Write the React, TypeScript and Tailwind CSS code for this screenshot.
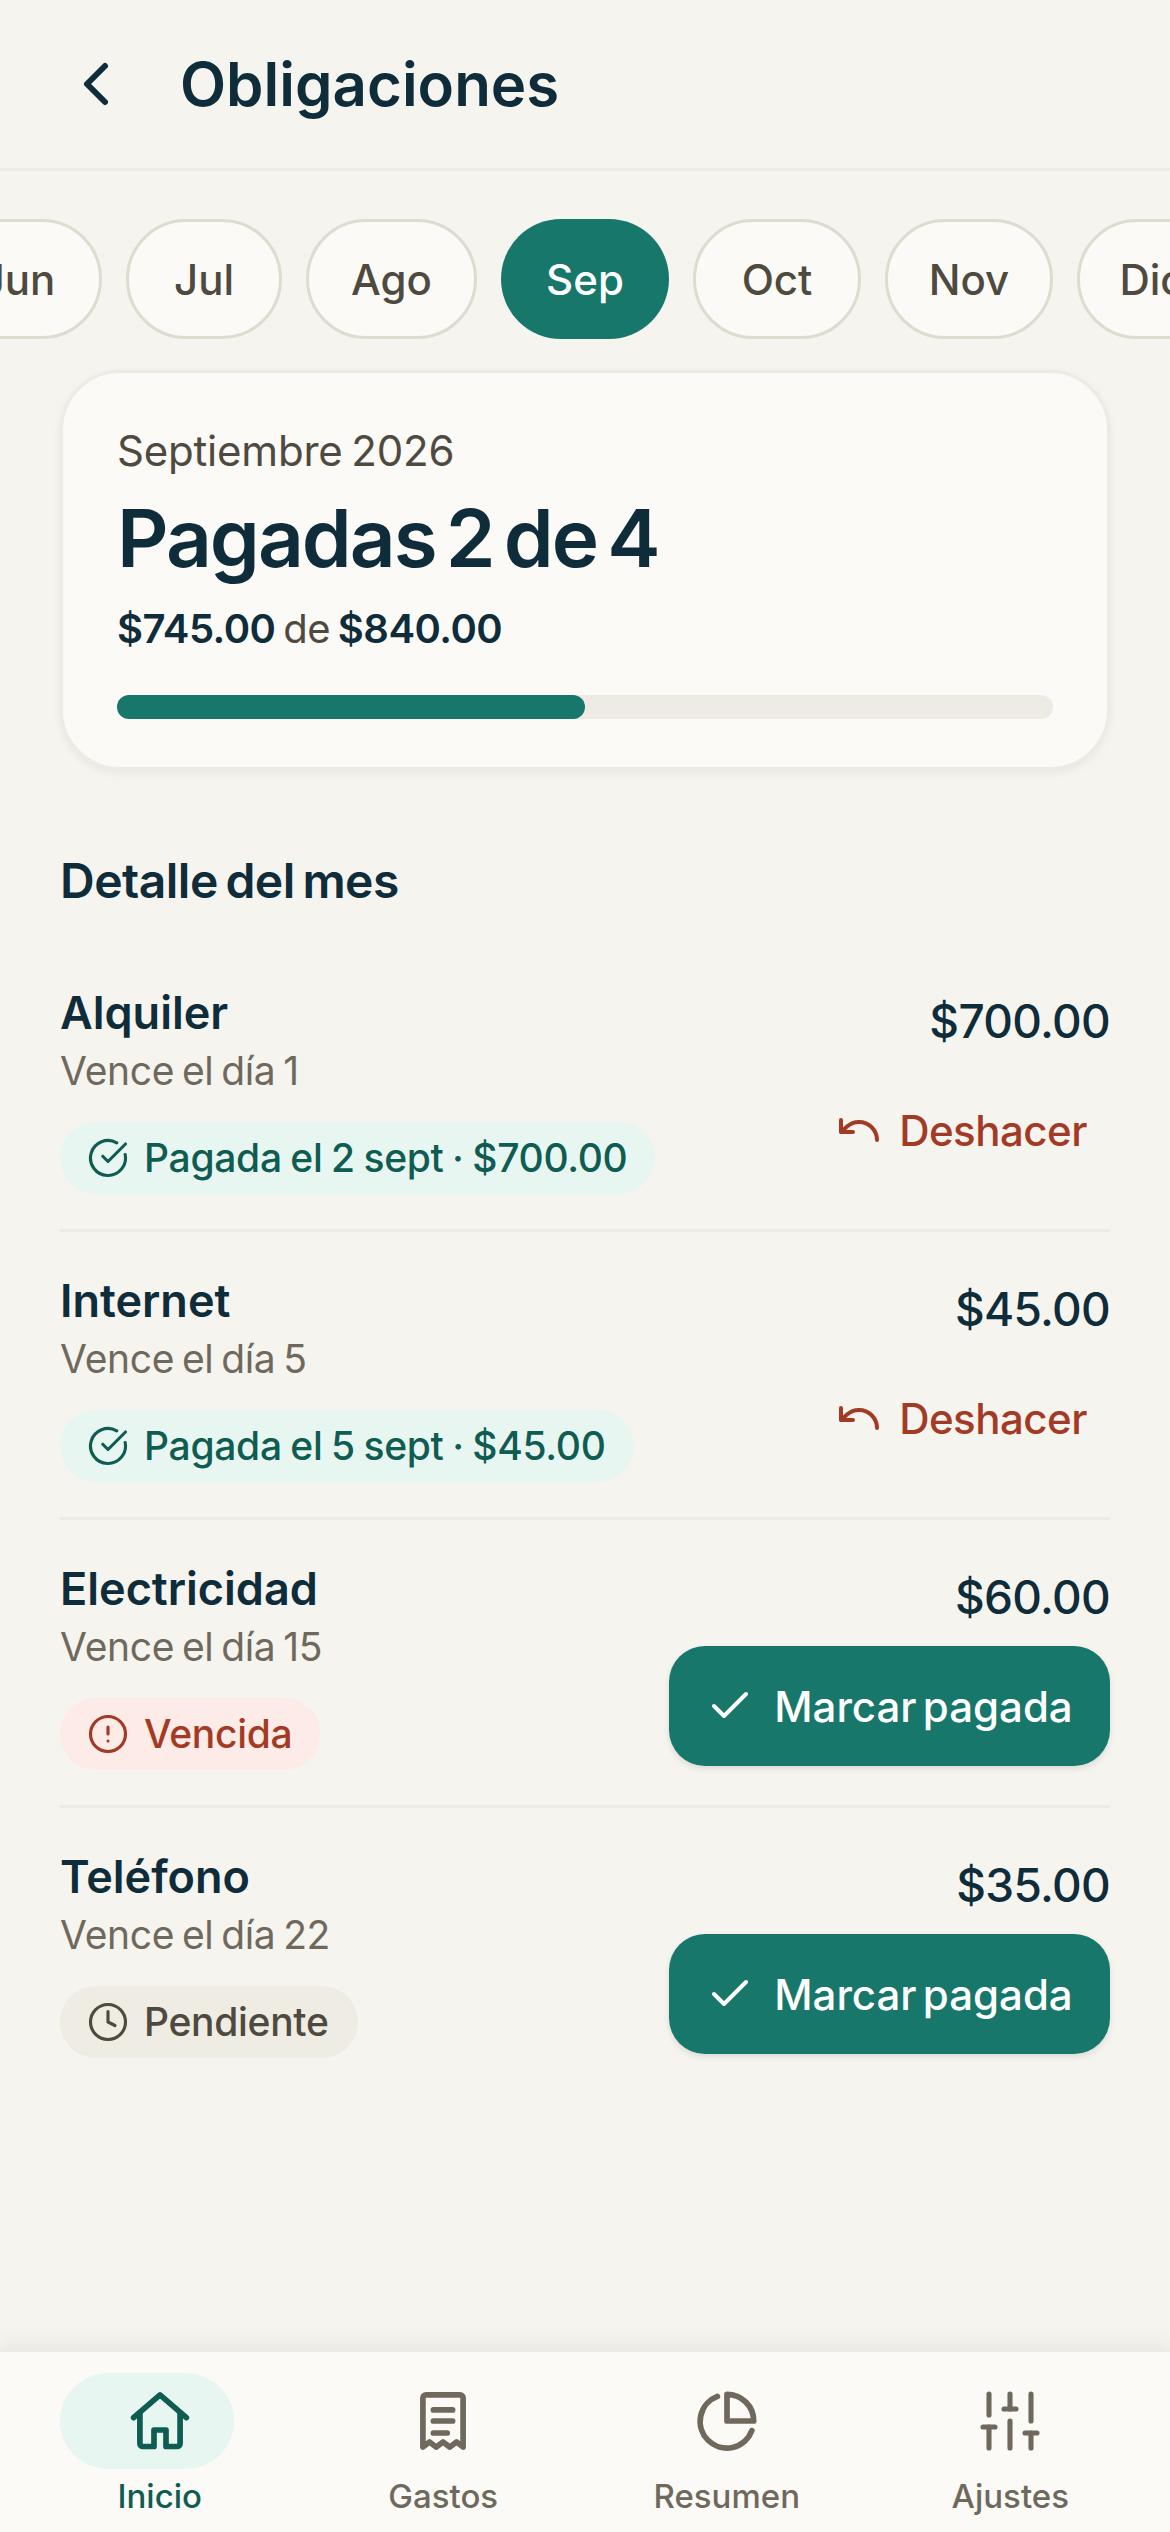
import { Check, ChevronLeft, CircleAlert, CircleCheckBig, Clock, SlidersVertical, Undo } from 'lucide-react';

const months = [
  { label: 'Jun', width: 'w-[168px]' },
  { label: 'Jul', width: 'w-[156px]' },
  { label: 'Ago', width: 'w-[171px]' },
  { label: 'Sep', width: 'w-[168px]', active: true },
  { label: 'Oct', width: 'w-[168px]' },
  { label: 'Nov', width: 'w-[168px]' },
  { label: 'Dic', width: 'w-[150px]' },
];

type Obligation = {
  name: string;
  due: string;
  amount: string;
  status: 'paid' | 'late' | 'pending';
  badge: string;
};

const obligations: Obligation[] = [
  { name: 'Alquiler', due: 'Vence el día 1', amount: '$700.00', status: 'paid', badge: 'Pagada el 2 sept · $700.00' },
  { name: 'Internet', due: 'Vence el día 5', amount: '$45.00', status: 'paid', badge: 'Pagada el 5 sept · $45.00' },
  { name: 'Electricidad', due: 'Vence el día 15', amount: '$60.00', status: 'late', badge: 'Vencida' },
  { name: 'Teléfono', due: 'Vence el día 22', amount: '$35.00', status: 'pending', badge: 'Pendiente' },
];

function HomeIcon() {
  return (
    <svg width="72" height="72" viewBox="0 0 24 24" fill="none" stroke="currentColor" strokeWidth="1.9" strokeLinecap="round" strokeLinejoin="round">
      <path d="M3.2 10.9 12 3.3l8.8 7.6" />
      <path d="M5.3 9.4v10.1a1 1 0 0 0 1 1H10V15h4v5.5h3.7a1 1 0 0 0 1-1V9.4" />
    </svg>
  );
}

function ReceiptIcon() {
  return (
    <svg width="72" height="72" viewBox="0 0 24 24" fill="none" stroke="currentColor" strokeWidth="1.9" strokeLinecap="round" strokeLinejoin="round">
      <path d="M5.3 20.7V4.3a1 1 0 0 1 1-1h11.4a1 1 0 0 1 1 1v16.4L16.5 19l-2.2 1.7L12 19l-2.3 1.7L7.5 19z" />
      <path d="M8.8 8.3h6.4M8.8 12h6.4M8.8 16h4.6" />
    </svg>
  );
}

function PieIcon() {
  return (
    <svg width="72" height="72" viewBox="0 0 24 24" fill="none" stroke="currentColor" strokeWidth="1.9" strokeLinecap="round" strokeLinejoin="round">
      <path d="M8.8 3.8A8.9 8.9 0 1 0 20.3 15.2" />
      <path d="M12 3.1A8.9 8.9 0 0 1 20.9 12H12z" />
    </svg>
  );
}

function SlidersIcon() {
  return <SlidersVertical size={72} strokeWidth={1.7} />;
}

function Badge({ status, text }: { status: Obligation['status']; text: string }) {
  if (status === 'paid') {
    return (
      <div className="mt-[24px] flex h-[72px] w-fit items-center gap-[15px] rounded-full bg-[#e8f6f1] pl-[27px] pr-[28px] text-[39px] font-medium tracking-[-0.3px] [word-spacing:-1.5px] text-[#0f5c52]">
        <CircleCheckBig size={42} strokeWidth={1.8} />
        <span>{text}</span>
      </div>
    );
  }
  if (status === 'late') {
    return (
      <div className="mt-[24px] flex h-[72px] w-fit items-center gap-[15px] rounded-full bg-[#fcebe7] pl-[27px] pr-[28px] text-[39px] font-medium tracking-[-0.3px] text-[#a33a26]">
        <CircleAlert size={42} strokeWidth={1.8} />
        <span>{text}</span>
      </div>
    );
  }
  return (
    <div className="mt-[24px] flex h-[72px] w-fit items-center gap-[15px] rounded-full bg-[#eeece3] pl-[27px] pr-[29px] text-[39px] font-medium tracking-[-0.3px] text-[#4f4a3f]">
      <Clock size={42} strokeWidth={1.8} />
      <span>{text}</span>
    </div>
  );
}

function Row({ item, last }: { item: Obligation; last: boolean }) {
  return (
    <div className={`flex h-[288px] justify-between pt-[39px] ${last ? '' : 'border-b-[3px] border-[#edebe3]'}`}>
      <div>
        <div className="text-[45px] font-semibold leading-[60px] text-[#0f2c3a]">{item.name}</div>
        <div className="mt-[1px] text-[39px] leading-[54px] tracking-[-0.3px] [word-spacing:-3px] text-[#6f695d]">{item.due}</div>
        <Badge status={item.status} text={item.badge} />
      </div>
      <div className="flex flex-col items-end">
        <div className="mt-[8px] text-[46px] font-[550] leading-[60px] tracking-[-0.7px] text-[#0f2c3a]">{item.amount}</div>
        {item.status === 'paid' ? (
          <div className="mt-[43px] flex h-[72px] items-center gap-[16px] pr-[23px] text-[42px] font-medium tracking-[-0.5px] text-[#a33a26]">
            <Undo size={48} strokeWidth={2} />
            <span>Deshacer</span>
          </div>
        ) : (
          <div className="mt-[19px] flex h-[120px] w-[441px] items-center justify-center gap-[20px] rounded-[36px] bg-[#17776b] text-[42px] font-medium [word-spacing:-5px] text-white shadow-[0_3px_6px_rgba(0,0,0,0.1)]">
            <Check size={48} strokeWidth={2} />
            <span>Marcar pagada</span>
          </div>
        )}
      </div>
    </div>
  );
}

const navItems = [
  { label: 'Inicio', icon: HomeIcon, active: true },
  { label: 'Gastos', icon: ReceiptIcon },
  { label: 'Resumen', icon: PieIcon },
  { label: 'Ajustes', icon: SlidersIcon },
];

export default function App() {
  return (
    <div className="flex h-[2532px] w-[1170px] flex-col overflow-hidden bg-[#f5f4ef] font-['Inter',sans-serif]">
      {/* Header */}
      <div className="flex h-[171px] shrink-0 items-center gap-[48px] border-b-[3px] border-[#edebe3] pl-[60px]">
        <ChevronLeft size={72} strokeWidth={2} className="text-[#0f2c3a]" />
        <h1 className="text-[60px] font-semibold text-[#0f2c3a]">Obligaciones</h1>
      </div>

      {/* Month chips */}
      <div className="mt-[48px] ml-[-66px] flex shrink-0 gap-[24px]">
        {months.map((m) => (
          <div
            key={m.label}
            className={`flex h-[120px] shrink-0 items-center justify-center rounded-full text-[42px] font-medium ${m.width} ${
              m.active
                ? 'bg-[#17776b] text-white'
                : 'border-[3px] border-[#dedbcf] bg-[#fbfaf6] text-[#4f4a3f]'
            }`}
          >
            {m.label}
          </div>
        ))}
      </div>

      {/* Summary card */}
      <div className="mx-[60px] mt-[31px] h-[400px] shrink-0 rounded-[60px] border-[3px] border-[#edebe3] bg-[#fbfaf6] px-[54px] pt-[51px] shadow-[0_3px_9px_rgba(0,0,0,0.06)]">
        <div className="text-[42px] leading-[54px] tracking-[-0.2px] [word-spacing:-3px] text-[#4f4a3f]">Septiembre 2026</div>
        <div className="mt-[6px] text-[80px] font-semibold leading-[108px] tracking-[-2px] [word-spacing:-8px] text-[#0f2c3a]">Pagadas 2 de 4</div>
        <div className="mt-[10px] text-[40px] leading-[54px] tracking-[-0.5px] [word-spacing:-3px] text-[#4f4a3f]">
          <span className="font-semibold text-[#0f2c3a]">$745.00</span> de{' '}
          <span className="font-semibold text-[#0f2c3a]">$840.00</span>
        </div>
        <div className="mt-[39px] h-[24px] w-full rounded-full bg-[#edebe3]">
          <div className="h-full w-1/2 rounded-full bg-[#17776b]" />
        </div>
      </div>

      {/* Detail list */}
      <div className="flex flex-1 flex-col px-[60px] pt-[78px]">
        <h2 className="text-[48px] font-semibold leading-[66px] tracking-[-0.5px] [word-spacing:-4px] text-[#0f2c3a]">Detalle del mes</h2>
        <div className="mt-[30px]">
          {obligations.map((item, i) => (
            <Row key={item.name} item={item} last={i === obligations.length - 1} />
          ))}
        </div>
      </div>

      {/* Bottom nav */}
      <div className="grid h-[183px] shrink-0 grid-cols-4 border-t-[3px] border-[#edebe3] bg-[#fbfaf6] px-[18px] shadow-[0_-6px_18px_rgba(0,0,0,0.05)]">
        {navItems.map(({ label, icon: Icon, active }) => (
          <div key={label} className={`flex flex-col items-center pt-[21px] ${active ? 'text-[#0f5c52]' : 'text-[#6f695d]'}`}>
            <div className="relative flex h-[96px] w-[72px] items-center justify-center">
              {active && <div className="absolute left-[-64px] top-0 h-[96px] w-[174px] rounded-full bg-[#e8f6f1]" />}
              <div className="relative">
                <Icon />
              </div>
            </div>
            <div className="mt-[3px] text-[33px] font-medium">{label}</div>
          </div>
        ))}
      </div>
    </div>
  );
}
